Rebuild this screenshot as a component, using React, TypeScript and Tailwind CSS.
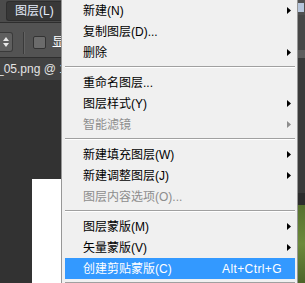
import React from "react";

/** 菜单项（"sep" 表示分隔线） */
type MenuItem =
  | { label: string; arrow?: boolean; disabled?: boolean; shortcut?: string; active?: boolean }
  | "sep";

const items: MenuItem[] = [
  { label: "新建(N)", arrow: true },
  { label: "复制图层(D)..." },
  { label: "删除", arrow: true },
  "sep",
  { label: "重命名图层..." },
  { label: "图层样式(Y)", arrow: true },
  { label: "智能滤镜", arrow: true, disabled: true },
  "sep",
  { label: "新建填充图层(W)", arrow: true },
  { label: "新建调整图层(J)", arrow: true },
  { label: "图层内容选项(O)...", disabled: true },
  "sep",
  { label: "图层蒙版(M)", arrow: true },
  { label: "矢量蒙版(V)", arrow: true },
  { label: "创建剪贴蒙版(C)", shortcut: "Alt+Ctrl+G", active: true },
  "sep",
];

const FONT = { fontFamily: '"Liberation Sans", "Noto Sans CJK SC", sans-serif' };

/** 子菜单小三角 */
function SubArrow({ color }: { color: string }) {
  return (
    <svg width="4" height="7" viewBox="0 0 4 7" className="shrink-0">
      <polygon points="0,0 4,3.5 0,7" fill={color} />
    </svg>
  );
}

function LayerMenu() {
  return (
    <div className="absolute left-[61px] top-0 w-[237px] bg-[#f0f0f0] border-x border-[#979797] pl-[3px] pr-[2px]">
      {items.map((it, idx) =>
        it === "sep" ? (
          <div key={idx} className="h-[9px] pt-[3px]">
            <div className="h-px bg-[#a0a0a0]" />
            <div className="h-px bg-white" />
          </div>
        ) : (
          <div
            key={idx}
            className={`flex h-[21px] items-center pl-[18px] text-[12px] leading-none ${
              it.active ? "bg-[#3399ff] text-white pr-[13px]" : it.disabled ? "text-[#8d8d8d] pr-[4px]" : "text-black pr-[4px]"
            }`}
          >
            <span className="flex-1 whitespace-nowrap">{it.label}</span>
            {it.shortcut && <span className="tracking-[0.4px]">{it.shortcut}</span>}
            {it.arrow && <SubArrow color={it.disabled ? "#8d8d8d" : "#000"} />}
          </div>
        )
      )}
    </div>
  );
}

export default function App() {
  return (
    <div className="relative h-[283px] w-[305px] overflow-hidden bg-[#323232]" style={FONT}>
      <div className="flex h-full">
        {/* 左侧工作区 */}
        <div className="flex flex-1 flex-col">
          {/* 菜单栏 */}
          <div className="flex h-[22px] items-start bg-[#4b4b4b] pl-[6px] pt-px">
            <div className="h-[20px] w-[55px] overflow-hidden rounded-l-[3px] border border-r-0 border-[#2e2e2e] bg-[#383838] pl-[8px] text-[12px] leading-[18px] text-[#e6eefc]">
              图层(L)
            </div>
          </div>
          {/* 选项栏 */}
          <div className="h-[35px] border-t border-[#2e2e2e] bg-[#535353]">
            <div className="flex w-[61px] items-start overflow-hidden pt-[9px]">
              <div className="flex h-[20px] w-[13px] shrink-0 items-center justify-center rounded-r-[3px] border border-l-0 border-[#3a3a3a] bg-[#5f5f5f]">
                <svg width="6" height="10" viewBox="0 0 6 10">
                  <polygon points="3,0 6,4 0,4" fill="#e8e8e8" />
                  <polygon points="0,6 6,6 3,10" fill="#e8e8e8" />
                </svg>
              </div>
              <div className="ml-[10px] flex h-[22px] shrink-0">
                <div className="w-px bg-[#3a3a3a]" />
                <div className="w-px bg-[#626262]" />
              </div>
              <div className="ml-[8px] mt-[4px] h-[13px] w-[13px] shrink-0 rounded-[2px] border border-[#333] bg-[#6b6b6b]" />
              <span className="ml-[6px] mt-[2px] whitespace-nowrap text-[13px] leading-[16px] text-white">显示</span>
            </div>
          </div>
          {/* 文档标签 */}
          <div className="h-[23px] border-t border-[#2e2e2e] bg-[#424242]">
            <div className="flex h-full w-[61px] items-center overflow-hidden">
              <span className="-ml-[3px] whitespace-nowrap text-[12px] text-[#e4e4e4]">_05.png @ 100%</span>
            </div>
          </div>
          {/* 画布区域 */}
          <div className="flex flex-1 flex-col bg-[#323232]">
            <div className="h-[99px]" />
            <div className="ml-[32px] flex-1 bg-white" />
          </div>
        </div>
        {/* 右侧面板边缘 */}
        <div className="flex w-[8px] flex-col">
          <div className="flex h-[15px] items-center bg-[#505050] pl-px">
            <div className="h-[9px] w-[6px] bg-[#b7c6dc]" />
          </div>
          <div className="h-[35px] bg-[#474747]" />
          <div className="h-[8px] bg-[#5d5d5d]" />
          <div className="h-[135px] bg-[#3a3a3a]" />
          <div className="h-[12px] bg-[#2c2c2c]" />
          <div className="flex-1 bg-gradient-to-b from-[#56702e] via-[#6d8a3c] to-[#4d6428]" />
        </div>
      </div>
      <LayerMenu />
    </div>
  );
}
